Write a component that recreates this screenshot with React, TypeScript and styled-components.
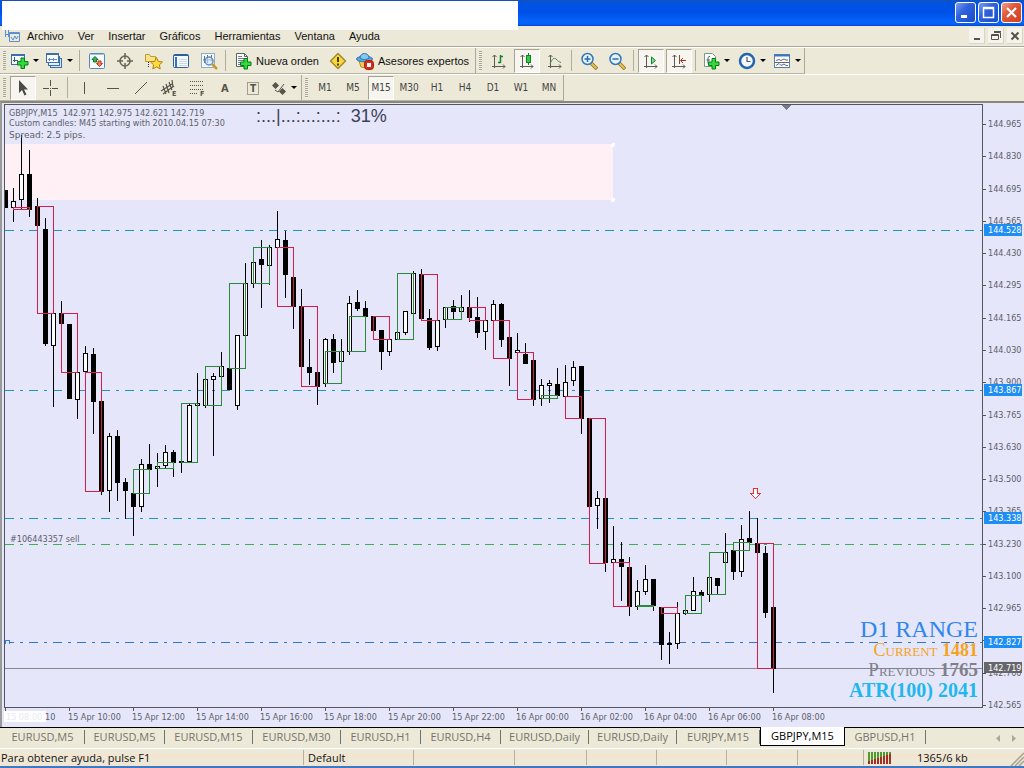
import React from "react";
import styled, { createGlobalStyle, css } from "styled-components";

const GlobalStyle = createGlobalStyle`
  *, *::before, *::after { box-sizing: border-box; }
  body { margin: 0; background: #ece9d8; font-family: "DejaVu Sans Condensed", "DejaVu Sans", sans-serif; font-size: 10px; color: #111; }
  button { font: inherit; color: inherit; border: 0; padding: 0; background: none; }
  svg { display: block; flex: none; }
`;

const uiFont = `"Open Sans", "Noto Sans", sans-serif`;
const menuFont = `"Liberation Sans", Arial, sans-serif`;
const chartFont = `"DejaVu Sans Condensed", "DejaVu Sans", sans-serif`;

const Window = styled.div`
  display: flex;
  flex-direction: column;
  min-height: 100vh;
  overflow: hidden;
`;

/* ---------- title bar ---------- */

const TitleBar = styled.header`
  position: relative;
  display: flex;
  justify-content: flex-end;
  gap: 2px;
  height: 26px;
  padding: 2px 2px 0;
  background: linear-gradient(#1a50b8 0, #0054e3 3px, #0050e6 12px, #0361f8 20px, #0561fa 24px, #0046c8 26px);
`;

const TitleBlank = styled.div`
  position: absolute;
  left: 2px;
  top: 1px;
  width: 516px;
  height: 29px;
  background: #fff;
`;

const WindowButton = styled.button<{ $close?: boolean }>`
  display: grid;
  place-items: center;
  width: 21px;
  height: 21px;
  border: 1px solid #fff;
  border-radius: 3px;
  background: ${(p) =>
    p.$close
      ? "linear-gradient(135deg, #f0a088, #e0583a 40%, #d04020)"
      : "linear-gradient(135deg, #7ba0f0, #2f62dd 40%, #1c4cc8)"};
`;

/* ---------- menu bar ---------- */

const MenuBar = styled.nav`
  display: flex;
  align-items: center;
  height: 21px;
  padding-left: 5px;
  border-bottom: 1px solid #aca899;
  font-family: ${menuFont};
  font-size: 11px;
`;

const MenuItem = styled.button`
  height: 18px;
  margin-right: 14px;
  line-height: 18px;
`;

const MenuLogo = styled.span`
  margin-right: 7px;
`;

const ChildControls = styled.div`
  display: flex;
  gap: 3px;
  margin-left: auto;
  padding-right: 1px;
`;

const ChildButton = styled.button`
  display: grid;
  place-items: center;
  width: 16px;
  height: 16px;
  background: #f4f3ec;
  border-right: 1px solid #d8d5c4;
  border-bottom: 1px solid #d8d5c4;
`;

/* ---------- tool bars ---------- */

const ToolRow = styled.div`
  display: flex;
  height: 27px;
  border-top: 1px solid #fff;
`;

const ToolGroup = styled.div`
  display: flex;
  align-items: center;
  height: 26px;
  border-right: 1px solid #aca899;
  border-bottom: 1px solid #b9b5a3;
`;

const Grip = styled.span`
  width: 3px;
  height: 20px;
  margin: 0 3px;
  background: repeating-linear-gradient(#a7a493 0 1px, #f2f0e4 1px 2px);
`;

const pressed = css`
  background: #f6f5ef;
  border: 1px solid #fff;
  border-top-color: #a5a294;
  border-left-color: #a5a294;
`;

const ToolButton = styled.button<{ $w?: number; $on?: boolean }>`
  display: flex;
  align-items: center;
  justify-content: center;
  gap: 4px;
  width: ${(p) => p.$w ?? 26}px;
  height: 24px;
  margin: 0 1px;
  white-space: nowrap;
  ${(p) => p.$on && pressed}
`;

const LabelButton = styled(ToolButton)`
  width: auto;
  padding: 0 5px 0 4px;
  font-family: ${menuFont};
  font-size: 11px;
`;

const PeriodButton = styled(ToolButton)`
  color: #444;
  font-size: 10px;
`;

const Divider = styled.span`
  width: 1px;
  height: 21px;
  margin: 0 3px 0 2px;
  background: #b0ad9c;
`;

const Caret = styled.span`
  border: 3px solid transparent;
  border-top-color: #000;
  border-bottom: 0;
`;

/* ---------- chart ---------- */

const ChartWindow = styled.main`
  display: grid;
  grid-template-columns: minmax(0, 1fr) 41px;
  grid-template-rows: 604px 18px;
  position: relative;
  flex: 1;
  padding: 1px 0 0 2px;
  border-top: 2px solid #8a877a;
  border-left: 2px solid #9a9a98;
  background: #e6e6fa;
`;

const Plot = styled.div`
  position: relative;
  border: 1px solid #55555e;
  overflow: hidden;
`;

const Quote = styled.div`
  position: absolute;
  left: 4px;
  top: 3px;
  color: #5c6068;
  font: 9px/10px ${chartFont};
  white-space: pre;
`;

const Spread = styled.div`
  font: 9px/14px "DejaVu Sans", sans-serif;
`;

const OrderLabel = styled.div`
  position: absolute;
  left: 5px;
  top: 428px;
  color: #5c6068;
  font: 9px/12px ${chartFont};
`;

const Progress = styled.div`
  position: absolute;
  left: 251px;
  top: 1px;
  color: #3a4058;
  font: 18px/20px "Liberation Sans", sans-serif;
  white-space: pre;
`;

const Range = styled.div`
  position: absolute;
  right: 4px;
  top: 513px;
  text-align: right;
  font-family: "Liberation Serif", serif;
`;

const RangeLine = styled.div<{ $c: string; $size: number }>`
  color: ${(p) => p.$c};
  font-size: ${(p) => p.$size}px;
  line-height: ${(p) => (p.$size > 20 ? 22 : 20)}px;
  font-variant: small-caps;
`;

const AxisText = styled.text<{ $c?: string }>`
  font: 9px ${chartFont};
  fill: ${(p) => p.$c ?? "#5c6068"};
`;

const PriceColumn = styled.div`
  grid-row: 1 / span 2;
  grid-column: 2;
`;

/* ---------- tabs and status ---------- */

const Tabs = styled.div`
  display: flex;
  height: 22px;
  border-top: 1px solid #000;
  border-bottom: 1px solid #fff;
  padding-left: 1px;
  color: #76746a;
  font-family: ${uiFont};
  font-size: 11px;
`;

const Tab = styled.button<{ $w: number; $on?: boolean }>`
  width: ${(p) => p.$w}px;
  height: 14px;
  margin-top: 2px;
  line-height: 14px;
  border-right: 1px solid #77756a;
  ${(p) =>
    p.$on &&
    css`
      height: 19px;
      margin-top: -1px;
      line-height: 17px;
      padding-bottom: 1px;
      color: #000;
      background: #fff;
      border: 1px solid #000;
      border-top: 0;
    `}
`;

const TabArrows = styled.div`
  display: flex;
  gap: 12px;
  align-items: center;
  margin-left: auto;
  padding-right: 8px;
`;

const StatusBar = styled.footer`
  display: grid;
  grid-template-columns: 303px 110px 101px 72px 70px 70px 71px 66px minmax(0, 1fr) 16px;
  align-items: center;
  height: 19px;
  border-bottom: 2px solid #3f79c4;
  background: linear-gradient(#ece9d8 4px, #f2e6d2 5px 10px, #ebe9d8 11px 14px, #f2e6d2 15px);
  font-family: ${uiFont};
  font-size: 11px;
`;

const StatusCell = styled.div<{ $line?: boolean }>`
  height: 15px;
  line-height: 15px;
  padding-left: ${(p) => (p.$line ? 4 : 1)}px;
  border-left: ${(p) => (p.$line ? "1px solid #b4b1a0" : "0")};
`;

const Traffic = styled(StatusCell)`
  display: flex;
  align-items: center;
  gap: 25px;
  white-space: nowrap;
`;

/* ---------- icons ---------- */

const Icon = ({ children, w = 18 }: { children: React.ReactNode; w?: number }) => (
  <svg width={w} height="18" viewBox={`0 0 ${w} 18`} fill="none" aria-hidden="true">
    {children}
  </svg>
);

const Plus = ({ x, y }: { x: number; y: number }) => (
  <path
    transform={`translate(${x} ${y})`}
    d="M4 .5h3.500v3.500h3.500v3.500H7.500V11H4V7.500H.5V4H4z"
    fill="#2fdc3c"
    stroke="#0a7a18"
  />
);

const NewChart = () => (
  <Icon w={19}>
    <rect x="1.500" y="2.500" width="13" height="10" fill="#f3f8ff" stroke="#3c70ac" />
    <path d="M1 3h14" stroke="#3c70ac" strokeWidth="2" />
    <path d="M4.500 5v5M3 8.500h5" stroke="#456" />
    <Plus x={7} y={5.5} />
  </Icon>
);
const Profiles = () => (
  <Icon>
    <rect x="5.500" y="6.500" width="11" height="9" fill="#d9e8fa" stroke="#3c70ac" />
    <rect x="3.500" y="4.500" width="11" height="9" fill="#e4effc" stroke="#3c70ac" />
    <rect x="1.500" y="1.500" width="12" height="9" fill="#f5faff" stroke="#3c70ac" />
    <path d="M1 2.500h13" stroke="#3c70ac" />
    <path d="M3 7.500h9M4.500 6v3M8.500 6v3" stroke="#668ab8" />
  </Icon>
);
const MarketWatch = () => (
  <Icon>
    <rect x="1.500" y="1.500" width="15" height="15" rx="1" fill="#f7fbff" stroke="#4f8ab8" />
    <path d="M2 2.500h14" stroke="#9cc4e4" />
    <path d="M7 4.500l3 3H8.500v2.500h-3V7.500H4z" fill="#39b54a" stroke="#137326" />
    <path d="M11.500 14.500l-3-3h1.500V9h3v2.500h1.500z" fill="#f08060" stroke="#b8361c" />
  </Icon>
);
const Navigator = () => (
  <Icon>
    <circle cx="9" cy="9" r="5" stroke="#66645a" strokeWidth="1.500" />
    <path d="M9 1v6M9 11v6M1 9h6M11 9h6" stroke="#66645a" strokeWidth="1.500" />
  </Icon>
);
const Favorites = () => (
  <Icon w={19}>
    <path d="M1.500 2.500h4l1 2h5v5h-10z" fill="#fbe38a" stroke="#c09a34" />
    <path d="M4.500 10v6" stroke="#333" strokeDasharray="1 1" />
    <path
      transform="translate(6.500 5.500)"
      d="M6 0l1.800 3.900 4.200.5-3.100 2.900.8 4.200L6 9.400l-3.700 2.100.8-4.200L0 4.400l4.200-.5z"
      fill="#ffdb3b"
      stroke="#b08408"
    />
  </Icon>
);
const Terminal = () => (
  <Icon>
    <rect x="1.500" y="2.500" width="15" height="13" rx="1" fill="#f5faff" stroke="#2d5f9c" />
    <path d="M2 3.500h14" stroke="#2d5f9c" />
    <path d="M3 5h2v10H3z" fill="#3574ba" />
    <path d="M7 7.500h8M7 9.500h8M7 11.500h8M7 13.500h8" stroke="#c8d8ea" />
  </Icon>
);
const Tester = () => (
  <Icon>
    <rect x="1.500" y="1.500" width="13" height="14" fill="#f4f8fd" stroke="#96a9c2" />
    <path d="M4.500 4v7M7.500 3v8M11.500 3v6M3 8h9" stroke="#5c6f91" />
    <circle cx="9" cy="9" r="4" fill="#cfe6fa99" stroke="#5f8fc0" strokeWidth="1.500" />
    <path d="M12 12l5 5" stroke="#c79b30" strokeWidth="2.500" />
  </Icon>
);
const Order = () => (
  <Icon>
    <path d="M2.500 1.500h8l3 3v10h-11z" fill="#fff" stroke="#566" />
    <path d="M10.500 1.500v3h3" stroke="#566" />
    <path d="M4 4.500h4M4 6.500h6M4 8.500h6M4 10.500h4M4 12.500h4" stroke="#778" />
    <Plus x={6} y={6} />
  </Icon>
);
const Editor = () => (
  <Icon>
    <path d="M9 1.500L16.500 9 9 16.500 1.500 9z" fill="#f7d840" stroke="#a38a2a" strokeLinejoin="round" strokeWidth="1.500" />
    <path d="M9 5v5M9 11.500v2" stroke="#4c3d00" strokeWidth="2" />
  </Icon>
);
const Experts = () => (
  <Icon>
    <path d="M3 9l2 6 6 1 4-4V8z" fill="#f4cf56" stroke="#b4892a" />
    <ellipse cx="8.500" cy="7" rx="8" ry="2.800" fill="#58a9dd" stroke="#2c75ad" />
    <path d="M4 6c0-6 9-6 9 0-2 2-7 2-9 0z" fill="#86c6ef" stroke="#2c75ad" />
    <rect x="8.500" y="8.500" width="9" height="9" rx="3" fill="#db2a16" stroke="#a81708" />
    <rect x="11" y="11" width="4" height="4" fill="#fff" />
  </Icon>
);
const axes = <path d="M4.500 3v13M2 14.500h13M2.500 5l2-2 2 2M13 12.500l2 2-2 2" stroke="#5d5b51" />;
const Bars = () => <Icon>{axes}<path d="M10.500 3v8M8 10.500h2.500M10.500 4.500H13" stroke="#15822b" strokeWidth="1.500" /></Icon>;
const Candles = () => <Icon>{axes}<path d="M10.500 1v12" stroke="#15822b" /><rect x="8.500" y="3.500" width="4" height="7" fill="#31cc45" stroke="#15822b" /></Icon>;
const LineChart = () => <Icon>{axes}<path d="M4 12c2-5 4-7 6-5s3 3 5 3.500" stroke="#4c8a58" /></Icon>;
const Lens = ({ plus }: { plus?: boolean }) => (
  <Icon>
    <path d="M11 11l6 6" stroke="#8f6d1c" strokeWidth="3.500" />
    <path d="M11 11l5.500 5.500" stroke="#e8c24c" strokeWidth="2" />
    <circle cx="7.500" cy="7" r="5.500" fill="#e2f2ff" stroke="#3675b8" strokeWidth="1.500" />
    <path d={plus ? "M4.500 7h6M7.500 4v6" : "M4.500 7h6"} stroke="#2c68ad" strokeWidth="1.500" />
  </Icon>
);
const AutoScroll = () => <Icon>{axes}<path d="M9.500 5l4 3.500-4 3.500z" fill="#7be089" stroke="#15822b" /></Icon>;
const Shift = () => <Icon>{axes}<path d="M9.500 3v9" stroke="#5d5b51" /><path d="M16 8.500h-5M13 6l-2.500 2.500L13 11" stroke="#b3261e" /></Icon>;
const Indicators = () => (
  <Icon>
    <path d="M2.500 1.500h8l3 3v10h-11z" fill="#fff" stroke="#798" />
    <path d="M8 4.500c-2 0-2 1-2 3v4M4.500 8H8" stroke="#456" />
    <Plus x={6} y={6} />
  </Icon>
);
const Clock = () => (
  <Icon>
    <circle cx="9" cy="9" r="7" fill="#f2f8ff" stroke="#2464ab" strokeWidth="2.500" />
    <path d="M9 5v4.500h3.500" stroke="#555" strokeWidth="1.200" />
  </Icon>
);
const Template = () => (
  <Icon>
    <rect x="1.500" y="2.500" width="15" height="13" fill="#fff" stroke="#567fae" />
    <path d="M1 3.500h16" stroke="#3b78bd" strokeWidth="2" />
    <path d="M3 8.500l3-1 2 1 3-1.500 2 1h2M3 13.500l3-2 2 2 3-1.500 2 1.500h2M2 10.500h14" stroke="#667" />
  </Icon>
);

const grey = "#55534a";
const Arrow = () => <Icon><path d="M5 1v13l3-3 2.500 5.500 2-1L10 10.500h4z" fill="#4c4a42" /></Icon>;
const Cross = () => <Icon><path d="M8.500 1v6M8.500 11v6M1 9.500h6M10 9.500h6M8 9.500h1" stroke={grey} /></Icon>;
const VLine = () => <Icon><path d="M8.500 3v12" stroke={grey} /></Icon>;
const HLine = () => <Icon><path d="M3 9.500h12" stroke={grey} /></Icon>;
const Trend = () => <Icon><path d="M3 15L15 3" stroke={grey} /></Icon>;
const Channel = () => <Icon><path d="M1 12l11-7M3 15l11-8M3 7l3 8M6 5l3 9M9 3l3 8M12 1l1 7" stroke={grey} strokeWidth="1.200" /><text x="12" y="17" fontSize="7" fontWeight="bold" fill={grey}>E</text></Icon>;
const Fibo = () => <Icon><path d="M2 2.500h13M2 6.500h13M2 10.500h13M2 14.500h8" stroke={grey} strokeDasharray="1 1" /><text x="12" y="17" fontSize="7" fontWeight="bold" fill={grey}>F</text></Icon>;
const Letter = () => <Icon><text x="5" y="13" fontSize="11" fontWeight="bold" fill={grey}>A</text></Icon>;
const TextLabel = () => <Icon><rect x="3.500" y="3.500" width="11" height="12" stroke={grey} strokeDasharray="1 1" /><text x="6" y="13" fontSize="10" fontWeight="bold" fill={grey}>T</text></Icon>;
const Shapes = () => <Icon w={16}><path d="M4.500 3L8 6.500 4.500 10 1 6.500zM11.500 9L15 12.500 11.500 16 8 12.500z" fill={grey} /><path d="M4 11l3 2 6-8" stroke={grey} /></Icon>;

/* ---------- chart data ---------- */

// centre x, high, body top, body bottom, low, 1 = hollow (rising) body
const candles: number[][] = [
  [5,190,190,208,208,0],[13,188,201,208,222,1],[21,135,174,200,210,1],[29,150,174,210,217,0],[37,198,206,226,226,0],
  [45,218,229,344,346,0],[53,313,313,346,407,1],[61,301,313,324,324,0],[69,324,324,399,399,0],[77,372,372,400,419,1],
  [85,346,353,372,372,1],[93,348,354,402,434,0],[101,401,401,492,495,0],[109,433,436,491,512,1],[117,430,436,483,501,0],
  [125,478,482,491,519,0],[133,493,493,507,536,0],[141,459,464,507,512,1],[149,444,464,470,470,0],[157,453,466,469,487,1],
  [165,445,452,466,469,1],[173,450,452,463,477,0],[181,461,461,463,473,0],[189,404,405,462,462,1],[197,373,403,406,406,1],
  [205,376,379,406,408,1],[213,373,376,380,456,1],[221,352,366,377,377,1],[229,368,368,390,390,0],[237,335,335,406,410,1],
  [245,263,283,336,336,1],[253,260,262,284,288,1],[261,240,259,265,308,0],[269,245,247,266,285,1],[277,211,239,248,248,1],
  [285,231,240,275,298,0],[293,277,277,307,329,0],[301,289,306,367,367,0],[309,339,367,373,385,0],[317,372,372,387,405,0],
  [325,338,339,384,387,1],[333,334,339,363,373,0],[341,339,351,362,362,1],[349,296,303,352,355,1],[357,290,302,309,311,0],
  [365,301,308,317,317,0],[373,316,316,331,331,0],[381,330,330,352,370,0],[389,339,339,352,356,1],[397,332,332,340,340,1],
  [405,311,311,333,335,1],[413,271,273,314,314,1],[421,269,274,319,319,0],[429,309,318,348,350,0],[437,320,320,347,351,1],
  [445,307,307,320,328,1],[453,300,306,312,319,0],[461,295,307,312,312,1],[469,290,307,318,322,0],[477,297,317,333,338,0],
  [485,320,320,332,350,1],[493,300,304,321,321,1],[501,303,304,340,347,0],[509,337,337,359,386,0],[517,333,350,353,353,1],
  [525,343,354,364,364,0],[533,360,360,400,406,0],[541,379,385,399,406,1],[549,380,383,386,403,1],[557,368,384,396,397,0],
  [565,365,382,397,397,1],[573,361,367,381,386,1],[581,366,366,419,434,0],[589,418,418,507,507,0],[597,491,498,506,529,1],
  [605,498,498,563,572,0],[613,526,559,563,563,1],[621,542,559,567,601,0],[629,557,567,607,616,0],[637,580,591,607,610,1],
  [645,565,579,592,595,1],[653,579,579,606,611,0],[661,607,607,645,660,0],[669,632,643,645,664,0],[677,602,613,644,649,1],
  [685,610,610,614,615,1],[693,577,591,611,611,1],[701,590,592,596,596,0],[709,577,577,595,602,1],[717,578,578,586,595,0],
  [725,533,552,563,563,1],[733,550,550,572,580,0],[741,525,539,572,577,1],[749,511,538,543,543,0],[757,518,543,553,553,0],
  [765,546,553,613,618,0],[773,607,607,669,693,0],
];

// left x, top, bottom, 1 = rising
const groups: number[][] = [
  [13,207,209,0],[37,206,313,0],[61,313,372,0],[85,372,491,0],[109,490,490,0],[133,469,493,1],[157,462,468,1],
  [181,403,462,1],[205,366,405,1],[229,283,368,1],[253,247,283,1],[277,247,306,0],[301,306,386,0],[325,351,383,1],
  [349,316,351,1],[373,316,339,0],[397,273,339,1],[421,274,320,0],[445,307,319,1],[469,307,320,0],[493,320,358,0],
  [517,352,399,0],[541,395,398,1],[565,396,418,0],[589,418,563,0],[613,562,606,0],[637,605,606,1],[661,607,613,0],
  [685,595,613,1],[709,552,594,1],[733,542,550,1],[757,543,668,0],
];

const levels = [230, 390, 518, 642];
const marks: [number, string][] = [[230, "144.528"], [390, "143.867"], [518, "143.338"], [642, "142.827"]];
const prices = ["144.965","144.830","144.695","144.565","144.430","144.295","144.165","144.030","143.900","143.765","143.630","143.500","143.365","143.230","143.100","142.965","","142.700","142.565"];
const times = ["15 Apr 10:00","15 Apr 12:00","15 Apr 14:00","15 Apr 16:00","15 Apr 18:00","15 Apr 20:00","15 Apr 22:00","16 Apr 00:00","16 Apr 02:00","16 Apr 04:00","16 Apr 06:00","16 Apr 08:00"];

const PriceChart = () => (
  <svg width="100%" height="602" shapeRendering="crispEdges" role="img" aria-label="GBPJPY M15">
    <g transform="translate(-5 -105)">
      <rect x="5" y="144" width="608" height="56" fill="#fff0f5" />
      <circle cx="613" cy="145" r="2" fill="#fff" />
      <circle cx="613" cy="200" r="2" fill="#fff" />
      {levels.map((y) => (
        <line key={y} x1="5" x2="4000" y1={y + 0.5} y2={y + 0.5} stroke={y === 642 ? "#2f78d0" : "#1f94bc"} strokeDasharray="9 6 3 6" />
      ))}
      <line x1="5" x2="4000" y1="544.500" y2="544.500" stroke="#3fae5a" strokeDasharray="9 6 3 6" />
      <line x1="5" x2="4000" y1="668.500" y2="668.500" stroke="#85858f" />
      {candles.map(([x, hi, top, bottom, lo, up]) => (
        <g key={x}>
          <rect x={x} y={hi} width="1" height={lo - hi} fill="#000" />
          {up ? (
            <rect x={x - 1.5} y={top + 0.5} width="4" height={bottom - top - 1} fill="#fff" stroke="#000" />
          ) : (
            <rect x={x - 2} y={top} width="5" height={bottom - top} fill="#000" />
          )}
        </g>
      ))}
      {groups.map(([x, top, bottom, up]) => (
        <rect key={x} x={x + 0.5} y={top + 0.5} width="16" height={bottom - top} fill="none" stroke={up ? "#2a8a3c" : "#d81c4c"} />
      ))}
      <path d="M781 105h10l-5 5z" fill="#777b88" />
      <path d="M753.500 488.500h4v5h3l-5 5-5-5h3z" fill="#fff" stroke="#e03030" />
      <path d="M5.500 644v-3.500h4v3.500" fill="#e6e6fa" stroke="#2f7fd8" />
    </g>
  </svg>
);

const PriceAxis = () => (
  <svg width="41" height="612" aria-label="Precio">
    <g transform="translate(-983 -104)">
      {prices.map((p, i) => {
        const y = Math.round(124 + i * 32.28);
        return (
          <g key={i}>
            <rect x="983" y={y} width="3" height="1" fill="#55555e" />
            {p && <AxisText x="988" y={y + 3}>{p}</AxisText>}
          </g>
        );
      })}
      {marks.map(([y, label]) => (
        <g key={y}>
          <rect x="984" y={y - 6} width="38" height="12" fill="#1e8ef5" />
          <AxisText x="988" y={y + 3} $c="#fff">{label}</AxisText>
        </g>
      ))}
      <rect x="984" y="662" width="38" height="11" fill="#66666a" />
      <AxisText x="988" y="671" $c="#fff">142.719</AxisText>
    </g>
  </svg>
);

const TimeAxis = () => (
  <svg width="100%" height="18" aria-label="Tiempo">
    <g transform="translate(-4 -708)">
      <rect x="5" y="708" width="1" height="3" fill="#55555e" />
      <rect x="2" y="711" width="44" height="11" fill="#fff" />
      <AxisText x="6" y="720" $c="#e9e9f0">15 08:00</AxisText>
      <AxisText x="45" y="720">10</AxisText>
      {times.map((t, i) => (
        <g key={t}>
          <rect x={69 + i * 64} y="708" width="1" height="3" fill="#55555e" />
          <AxisText x={68 + i * 64} y="720">{t}</AxisText>
        </g>
      ))}
    </g>
  </svg>
);

const menus = ["Archivo", "Ver", "Insertar", "Gráficos", "Herramientas", "Ventana", "Ayuda"];
const tabs: [string, number][] = [["EURUSD,M5",84],["EURUSD,M5",80],["EURUSD,M15",88],["EURUSD,M30",88],["EURUSD,H1",80],["EURUSD,H4",80],["EURUSD,Daily",88],["EURUSD,Daily",88],["EURJPY,M15",83],["GBPJPY,M15",85],["GBPUSD,H1",81]];
const periods = ["M1","M5","M15","M30","H1","H4","D1","W1","MN"];
const drawTools: [string, () => React.JSX.Element][] = [["Línea vertical",VLine],["Línea horizontal",HLine],["Tendencia",Trend],["Canal",Channel],["Fibonacci",Fibo],["Texto",Letter],["Etiqueta",TextLabel]];
const panels: [string, () => React.JSX.Element][] = [["Mercado",MarketWatch],["Datos",Navigator],["Navegador",Favorites],["Terminal",Terminal],["Probador",Tester]];

export default function App() {
  return (
    <Window>
      <GlobalStyle />
      <TitleBar>
        <TitleBlank />
        <WindowButton aria-label="Minimizar"><svg width="13" height="13"><path d="M2 9h6v3H2z" fill="#fff" /></svg></WindowButton>
        <WindowButton aria-label="Maximizar"><svg width="13" height="13" fill="none"><path d="M1.500 1.500h10v10h-10zM1 2.500h11" stroke="#fff" strokeWidth="1.500" /></svg></WindowButton>
        <WindowButton $close aria-label="Cerrar"><svg width="13" height="13"><path d="M2 2l9 9M11 2l-9 9" stroke="#fff" strokeWidth="2.200" /></svg></WindowButton>
      </TitleBar>

      <MenuBar>
        <MenuLogo>
          <svg width="15" height="14" fill="none"><path d="M.5 1v7M3.500 0v8M0 5.500h4M4.500 3.500h10v9h-10zM5 4.500h9" stroke="#5b8fd0" /><path d="M6 8l2 3 2-4 1.500 3L13 7" stroke="#5b8fd0" /></svg>
        </MenuLogo>
        {menus.map((m) => <MenuItem key={m}>{m}</MenuItem>)}
        <ChildControls>
          <ChildButton aria-label="Minimizar gráfico"><svg width="12" height="12"><path d="M3 8h6v2H3z" fill="#55534a" /></svg></ChildButton>
          <ChildButton aria-label="Restaurar gráfico"><svg width="12" height="12" fill="none"><path d="M1.500 4.500h7v5h-7zM1 5.500h8M4 2.500h6.500V8M4 1.500h7" stroke="#55534a" /></svg></ChildButton>
          <ChildButton aria-label="Cerrar gráfico"><svg width="12" height="12"><path d="M2.500 2.500l7 7M9.500 2.500l-7 7" stroke="#55534a" strokeWidth="2" /></svg></ChildButton>
        </ChildControls>
      </MenuBar>

      <ToolRow>
        <ToolGroup>
          <Grip />
          <ToolButton $w={29} aria-label="Nuevo gráfico"><NewChart /><Caret /></ToolButton>
          <ToolButton $w={35} aria-label="Perfiles"><Profiles /><Caret /></ToolButton>
          <Divider />
          {panels.map(([n, I]) => <ToolButton key={n} aria-label={n}><I /></ToolButton>)}
          <Divider />
          <LabelButton><Order />Nueva orden</LabelButton>
          <ToolButton $w={24} aria-label="MetaEditor"><Editor /></ToolButton>
          <LabelButton><Experts />Asesores expertos</LabelButton>
        </ToolGroup>
        <ToolGroup>
          <Grip />
          <ToolButton aria-label="Barras"><Bars /></ToolButton>
          <ToolButton $on aria-label="Velas"><Candles /></ToolButton>
          <ToolButton aria-label="Línea"><LineChart /></ToolButton>
          <Divider />
          <ToolButton aria-label="Acercar"><Lens plus /></ToolButton>
          <ToolButton aria-label="Alejar"><Lens /></ToolButton>
          <Divider />
          <ToolButton $on aria-label="Desplazamiento automático"><AutoScroll /></ToolButton>
          <ToolButton $on aria-label="Desplazar gráfico"><Shift /></ToolButton>
          <Divider />
          <ToolButton $w={32} aria-label="Indicadores"><Indicators /><Caret /></ToolButton>
          <ToolButton $w={35} aria-label="Períodos"><Clock /><Caret /></ToolButton>
          <ToolButton $w={32} aria-label="Plantillas"><Template /><Caret /></ToolButton>
        </ToolGroup>
      </ToolRow>

      <ToolRow>
        <ToolGroup>
          <Grip />
          <ToolButton $on aria-label="Cursor"><Arrow /></ToolButton>
          <ToolButton aria-label="Punto de mira"><Cross /></ToolButton>
          <Divider />
          {drawTools.map(([n, I]) => <ToolButton key={n} aria-label={n}><I /></ToolButton>)}
          <ToolButton $w={32} aria-label="Flechas"><Shapes /><Caret /></ToolButton>
        </ToolGroup>
        <ToolGroup>
          <Grip />
          {periods.map((p) => <PeriodButton key={p} $on={p === "M15"}>{p}</PeriodButton>)}
        </ToolGroup>
      </ToolRow>

      <ChartWindow>
        <Plot>
          <PriceChart />
          <Quote>
            <div>{"GBPJPY,M15  142.971 142.975 142.621 142.719"}</div>
            <div>Custom candles: M45 starting with 2010.04.15 07:30</div>
            <Spread>Spread: 2.5 pips.</Spread>
          </Quote>
          <OrderLabel>#106443357 sell</OrderLabel>
          <Progress>{":...|...:...:...:  31%"}</Progress>
          <Range>
            <RangeLine $c="#2f86ee" $size={24}>D1 RANGE</RangeLine>
            <RangeLine $c="#f5a31c" $size={18}>Current <b>1481</b></RangeLine>
            <RangeLine $c="#808088" $size={19}>Previous <b>1765</b></RangeLine>
            <RangeLine $c="#1fb8ee" $size={20}><b>ATR(100) 2041</b></RangeLine>
          </Range>
        </Plot>
        <PriceColumn><PriceAxis /></PriceColumn>
        <TimeAxis />
      </ChartWindow>

      <Tabs>
        {tabs.map(([t, w], i) => <Tab key={i} $w={w} $on={t === "GBPJPY,M15"}>{t}</Tab>)}
        <TabArrows>
          <svg width="4" height="7"><path d="M4 0v7L0 3.500z" fill="#aaa798" /></svg>
          <svg width="4" height="7"><path d="M0 0v7l4-3.500z" fill="#aaa798" /></svg>
        </TabArrows>
      </Tabs>

      <StatusBar>
        <StatusCell>Para obtener ayuda, pulse F1</StatusCell>
        <StatusCell $line>Default</StatusCell>
        {[0, 1, 2, 3, 4, 5].map((i) => <StatusCell key={i} $line />)}
        <Traffic $line>
          <svg width="24" height="12">
            {[0, 1, 2, 3, 4, 5, 6, 7].map((i) => (
              <g key={i}>
                <rect x={i * 3} y="0" width="2" height={9 - i} fill="#4f9a30" />
                <rect x={i * 3} y={9 - i} width="2" height={3 + i} fill="#a03020" />
              </g>
            ))}
          </svg>
          <span>1365/6 kb</span>
        </Traffic>
        <svg width="16" height="17"><path d="M3 17L16 4M7 17l9-9M11 17l5-5" stroke="#a5a294" strokeWidth="1.500" /></svg>
      </StatusBar>
    </Window>
  );
}
